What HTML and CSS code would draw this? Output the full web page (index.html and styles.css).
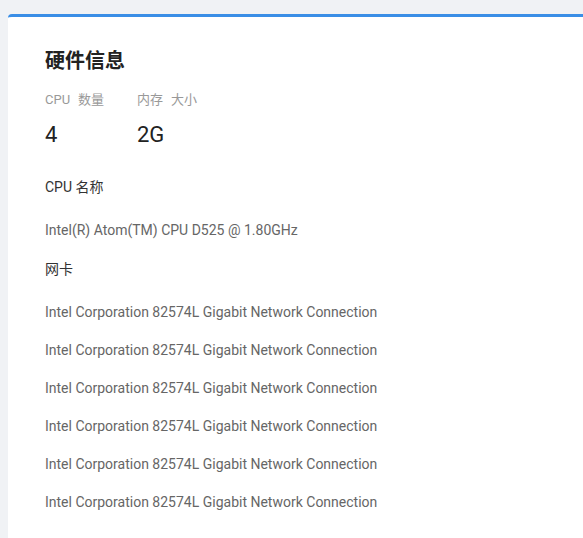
FILE: index.html
```html
<!DOCTYPE html>
<html lang="zh-CN">
<head>
    <meta charset="UTF-8">
    <meta name="viewport" content="width=device-width, initial-scale=1.0">
    <title>硬件信息</title>
    <link rel="stylesheet" href="styles.css">
</head>
<body>
    <div class="card">
        <h2 class="card-title">硬件信息</h2>
        <div class="stats">
            <div class="stat">
                <div class="stat-label">CPU<span class="gap"></span>数量</div>
                <div class="stat-value">4</div>
            </div>
            <div class="stat">
                <div class="stat-label">内存<span class="gap"></span>大小</div>
                <div class="stat-value">2G</div>
            </div>
        </div>
        <div class="section cpu">
            <div class="section-title">CPU 名称</div>
            <div class="item">Intel(R) Atom(TM) CPU D525 @ 1.80GHz</div>
        </div>
        <div class="section nic">
            <div class="section-title">网卡</div>
            <div class="item">Intel Corporation 82574L Gigabit Network Connection</div>
            <div class="item">Intel Corporation 82574L Gigabit Network Connection</div>
            <div class="item">Intel Corporation 82574L Gigabit Network Connection</div>
            <div class="item">Intel Corporation 82574L Gigabit Network Connection</div>
            <div class="item">Intel Corporation 82574L Gigabit Network Connection</div>
            <div class="item">Intel Corporation 82574L Gigabit Network Connection</div>
        </div>
    </div>
</body>
</html>
```

FILE: styles.css
```css
body {
    margin: 0;
    padding: 14px 0 0 8px;
    background-color: #f0f2f5;
    font-family: Roboto, "Noto Sans CJK SC", sans-serif;
    color: #333;
    overflow: hidden;
}
.card {
    background-color: #fff;
    border-top: 3px solid #3a8ee6;
    border-radius: 4px 0 0 0;
    padding: 29px 0 20px 37px;
    min-height: 500px;
}
.card-title {
    margin: 0;
    font-size: 20px;
    font-weight: bold;
    line-height: 30px;
    color: #222;
}
.stats {
    display: flex;
    margin-top: 14px;
}
.stat {
    width: 92px;
}
.stat-label {
    font-size: 13px;
    line-height: 20px;
    color: #999;
}
.gap {
    display: inline-block;
    width: 8px;
}
.stat-value {
    margin-top: 10px;
    font-size: 22px;
    line-height: 30px;
    color: #222;
}
.section.cpu {
    margin-top: 27px;
}
.section.nic {
    margin-top: 19px;
}
.section-title {
    font-size: 14px;
    line-height: 20px;
    color: #333;
}
.item {
    margin-top: 18px;
    font-size: 14px;
    line-height: 20px;
    color: #666;
}
.section-title + .item {
    margin-top: 23px;
}
```
